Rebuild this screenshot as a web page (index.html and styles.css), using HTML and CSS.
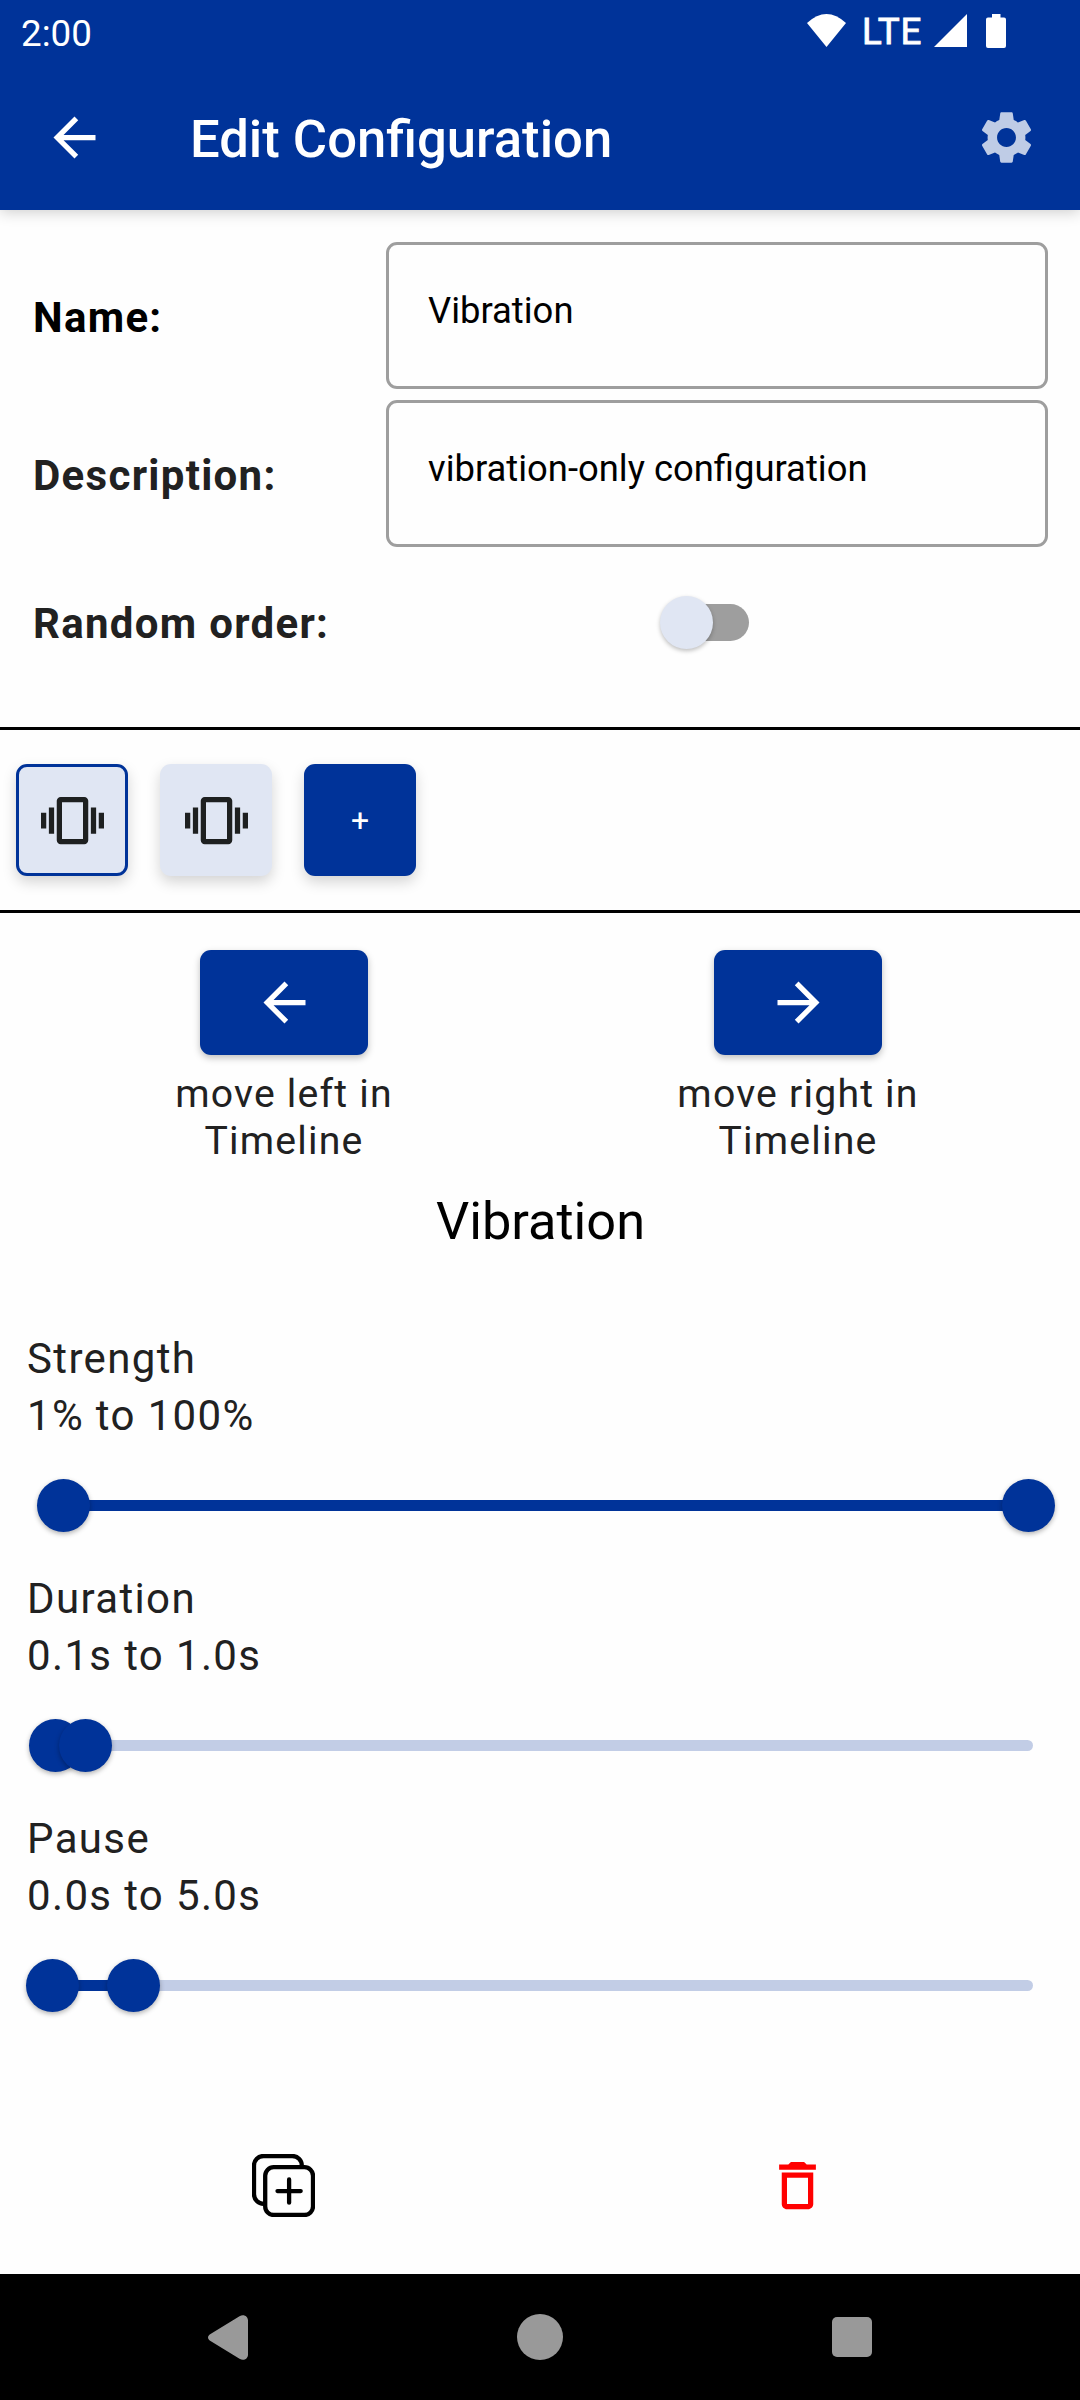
FILE: index.html
```html
<!DOCTYPE html>
<html lang="en">
<head>
<meta charset="utf-8">
<title>Edit Configuration</title>
<link rel="stylesheet" href="styles.css">
</head>
<body>
<div class="screen">
  <header class="top">
    <div class="status">
      <span class="clock">2:00</span>
      <div class="status-icons">
        <svg class="wifi" viewBox="0 0 39 33"><path d="M0 9Q19.500-9 39 9L19.500 33Z"/></svg>
        <span class="network">LTE</span>
        <svg class="signal" viewBox="0 0 33 33"><path d="M33 0V33H0Z"/></svg>
        <svg class="battery" viewBox="0 0 20 34"><path d="M6 0h8.500v3.500H18a2 2 0 0 1 2 2V32a2 2 0 0 1-2 2H2a2 2 0 0 1-2-2V5.500a2 2 0 0 1 2-2H6Z"/></svg>
      </div>
    </div>
    <div class="appbar">
      <svg class="icon" viewBox="0 0 24 24"><path d="M20 11H7.830l5.590-5.590L12 4l-8 8 8 8 1.410-1.410L7.830 13H20v-2z"/></svg>
      <h1 class="title">Edit Configuration</h1>
      <svg class="icon gear" viewBox="0 0 24 24"><path d="M19.140 12.940c.04-.3.06-.61.06-.94 0-.32-.02-.64-.07-.94l2.030-1.580c.18-.14.23-.41.12-.61l-1.920-3.320c-.12-.22-.37-.29-.59-.22l-2.390.96c-.5-.38-1.030-.7-1.620-.94l-.36-2.540c-.04-.24-.24-.41-.48-.41h-3.840c-.24 0-.43.17-.47.41l-.36 2.540c-.59.24-1.130.57-1.620.94l-2.390-.96c-.22-.08-.47 0-.59.22L2.740 8.870c-.12.21-.08.47.12.61l2.030 1.580c-.05.3-.09.63-.09.94s.02.64.07.94l-2.030 1.580c-.18.14-.23.41-.12.61l1.920 3.320c.12.22.37.29.59.22l2.390-.96c.5.38 1.030.7 1.620.94l.36 2.540c.05.24.24.41.48.41h3.840c.24 0 .44-.17.47-.41l.36-2.540c.59-.24 1.130-.56 1.620-.94l2.390.96c.22.08.47 0 .59-.22l1.920-3.320c.12-.22.07-.47-.12-.61l-2.010-1.580zM12 15.600c-1.980 0-3.600-1.620-3.600-3.600s1.620-3.600 3.600-3.600 3.600 1.620 3.600 3.600-1.620 3.600-3.600 3.600z"/></svg>
    </div>
  </header>

  <main class="content">
    <section class="form">
      <span class="label label-strong">Name:</span>
      <div class="field">Vibration</div>
      <span class="label">Description:</span>
      <div class="field">vibration-only configuration</div>
      <span class="label label-switch">Random order:</span>
      <div class="switch-cell"><div class="switch"><div class="switch-thumb"></div></div></div>
    </section>

    <section class="timeline">
      <div class="tile tile-selected">
        <svg class="icon" viewBox="0 0 24 24"><path d="M0 15h2V9H0v6zm3 2h2V7H3v10zm19-8v6h2V9h-2zm-3 8h2V7h-2v10zM16.500 3h-9C6.670 3 6 3.670 6 4.500v15c0 .83.67 1.500 1.500 1.500h9c.83 0 1.500-.67 1.500-1.500v-15c0-.83-.67-1.500-1.500-1.500zM16 19H8V5h8v14z"/></svg>
      </div>
      <div class="tile">
        <svg class="icon" viewBox="0 0 24 24"><path d="M0 15h2V9H0v6zm3 2h2V7H3v10zm19-8v6h2V9h-2zm-3 8h2V7h-2v10zM16.500 3h-9C6.670 3 6 3.670 6 4.500v15c0 .83.67 1.500 1.500 1.500h9c.83 0 1.500-.67 1.500-1.500v-15c0-.83-.67-1.500-1.500-1.500zM16 19H8V5h8v14z"/></svg>
      </div>
      <div class="tile tile-add">+</div>
    </section>

    <section class="columns moves">
      <div class="move">
        <div class="button"><svg class="icon" viewBox="0 0 24 24"><path d="M20 11H7.830l5.590-5.590L12 4l-8 8 8 8 1.410-1.410L7.830 13H20v-2z"/></svg></div>
        <p class="caption">move left in Timeline</p>
      </div>
      <div class="move">
        <div class="button"><svg class="icon" viewBox="0 0 24 24"><path d="M12 4l-1.410 1.410L16.170 11H4v2h12.170l-5.580 5.590L12 20l8-8z"/></svg></div>
        <p class="caption">move right in Timeline</p>
      </div>
    </section>

    <h2 class="heading">Vibration</h2>

    <section class="sliders">
      <div class="setting">
        <p class="setting-text">Strength<br>1% to 100%</p>
        <div class="slider"><div class="track"><div class="range">
          <div class="active" style="left:1.15%;right:0%"></div>
          <div class="thumb" style="left:1.15%"></div>
          <div class="thumb" style="left:99.95%"></div>
        </div></div></div>
      </div>
      <div class="setting">
        <p class="setting-text">Duration<br>0.1s to 1.0s</p>
        <div class="slider"><div class="track"><div class="range">
          <div class="active" style="left:0.33%;right:96.6%"></div>
          <div class="thumb" style="left:0.33%"></div>
          <div class="thumb" style="left:3.4%"></div>
        </div></div></div>
      </div>
      <div class="setting">
        <p class="setting-text">Pause<br>0.0s to 5.0s</p>
        <div class="slider"><div class="track"><div class="range">
          <div class="active" style="left:0%;right:91.67%"></div>
          <div class="thumb" style="left:0%"></div>
          <div class="thumb" style="left:8.33%"></div>
        </div></div></div>
      </div>
    </section>

    <section class="columns actions">
      <svg class="duplicate" viewBox="0 0 63 63"><rect x="13.200" y="13.200" width="47.800" height="47.800" rx="8.500"/><path d="M11.500 49.800A9.500 9.500 0 0 1 2 40.300V11.500A9.500 9.500 0 0 1 11.500 2H40.300A9.500 9.500 0 0 1 49.800 11.500M37.100 25.500V48.700M25.500 37.100H48.700"/></svg>
      <svg class="icon delete" viewBox="0 0 24 24"><path d="M6 19c0 1.100.9 2 2 2h8c1.100 0 2-.9 2-2V7H6v12zM8 9h8v10H8V9zm7.500-5l-1-1h-5l-1 1H5v2h14V4h-3.500z"/></svg>
    </section>
  </main>

  <nav class="navbar">
    <svg class="nav-back" viewBox="0 0 40 45"><path d="M31.500 1.200C35.500-1.300 40 1 40 5.500V39.500C40 44 35.500 46.300 31.500 43.800L2.500 26C-.8 24-.8 21 2.500 19Z"/></svg>
    <div class="nav-home"></div>
    <div class="nav-recent"></div>
  </nav>
</div>
</body>
</html>
```
FILE: styles.css
```css
* {
  box-sizing: border-box;
}

body {
  margin: 0;
  background: #fefefe;
  color: #212121;
  font-family: Roboto, "Liberation Sans", sans-serif;
}

h1,
h2,
p {
  margin: 0;
  font-weight: 400;
}

svg {
  display: block;
  fill: currentColor;
}

.screen {
  display: flex;
  flex-direction: column;
  width: 1080px;
  height: 2400px;
  overflow: hidden;
}

.icon {
  flex: none;
  width: 63px;
  height: 63px;
}

.top {
  height: 210px;
  background: #003399;
  color: #fff;
  box-shadow: 0 2px 14px rgba(0, 0, 0, 0.2);
}

.status {
  display: flex;
  justify-content: space-between;
  height: 63px;
  padding: 0 74px 0 21px;
  font-size: 36.75px;
  line-height: 43px;
}

.clock {
  padding-top: 12px;
}

.status-icons {
  display: flex;
  align-items: flex-start;
}

.wifi {
  width: 39px;
  height: 33px;
  margin-top: 14px;
}

.network {
  width: 62px;
  margin: 10px 10px 0 16px;
  letter-spacing: 0.9px;
  -webkit-text-stroke: 0.8px currentColor;
}

.signal {
  width: 33px;
  height: 33px;
  margin: 14px 19px 0 0;
}

.battery {
  width: 20px;
  height: 34px;
  margin-top: 14px;
}

.appbar {
  display: flex;
  align-items: center;
  height: 147px;
  padding: 2px 42px 0 43px;
}

.title {
  flex: 1;
  padding: 2px 0 0 84px;
  font-size: 52.6px;
  font-weight: 500;
  line-height: 62px;
}

.gear {
  color: #bfcce6;
}

.content {
  flex: 1;
}

.form {
  display: grid;
  grid-template-columns: 353px 662px;
  grid-template-rows: 147px 147px 149px;
  row-gap: 11px;
  align-items: center;
  height: 517px;
  padding: 32px 32px 0 33px;
}

.label {
  padding-top: 5px;
  font-size: 42px;
  font-weight: 700;
  line-height: 50px;
  letter-spacing: 1.3px;
}

.label-strong {
  color: #000;
}

.label-switch {
  padding-bottom: 22px;
}

.field {
  height: 147px;
  padding: 44px 40px 0 39px;
  border: 3px solid #9e9e9e;
  border-radius: 11px;
  color: #000;
  font-size: 36.4px;
  line-height: 43px;
}

.switch-cell {
  display: flex;
  padding: 0 0 21px 274px;
}

.switch {
  display: flex;
  align-items: center;
  width: 89px;
  height: 37px;
  border-radius: 19px;
  background: linear-gradient(90deg, transparent 20px, #9e9e9e 20px);
}

.switch-thumb {
  flex: none;
  width: 53px;
  height: 53px;
  border-radius: 50%;
  background: #e0e6f3;
  box-shadow: 0 2px 4px rgba(0, 0, 0, 0.25);
}

.timeline {
  display: flex;
  gap: 32px;
  height: 186px;
  padding: 34px 16px 0;
  border-top: 3px solid #000;
  border-bottom: 3px solid #000;
}

.tile {
  display: flex;
  align-items: center;
  justify-content: center;
  width: 112px;
  height: 112px;
  border-radius: 11px;
  background: #e0e6f3;
  color: #1e2020;
  box-shadow: 0 6px 14px rgba(0, 0, 0, 0.17);
}

.tile-selected {
  border: 3px solid #003399;
}

.tile-add {
  background: #003399;
  color: #fff;
  font-size: 32px;
  line-height: 38px;
}

.columns {
  display: grid;
  grid-template-columns: 514px 514px;
  justify-content: center;
  justify-items: center;
}

.moves {
  padding: 37px 0 0 2px;
}

.move {
  display: flex;
  flex-direction: column;
  align-items: center;
  gap: 16px;
}

.button {
  display: flex;
  align-items: center;
  justify-content: center;
  width: 168px;
  height: 105px;
  border-radius: 11px;
  background: #003399;
  color: #fff;
  box-shadow: 0 3px 7px rgba(0, 0, 0, 0.25);
}

.caption {
  width: 260px;
  font-size: 39.2px;
  line-height: 47px;
  letter-spacing: 1.2px;
  text-align: center;
}

.heading {
  padding: 25px 0 0 1px;
  color: #000;
  font-size: 52.3px;
  line-height: 62px;
  text-align: center;
}

.sliders {
  padding: 78px 27px 0;
}

.setting {
  height: 240px;
}

.setting-text {
  font-size: 42px;
  line-height: 57px;
  letter-spacing: 1.36px;
}

.slider {
  display: flex;
  align-items: center;
  height: 122px;
  padding: 0 20px;
}

.track {
  flex: 1;
  height: 11px;
  padding: 0 5px;
  border-radius: 6px;
  background: #c2cde6;
}

.range {
  position: relative;
  height: 11px;
}

.active {
  position: absolute;
  top: 0;
  height: 11px;
  background: #003399;
}

.thumb {
  position: absolute;
  top: -21px;
  width: 53px;
  height: 53px;
  margin-left: -26px;
  border-radius: 50%;
  background: #003399;
  box-shadow: 0 2px 5px rgba(0, 0, 0, 0.3);
}

.actions {
  padding-top: 104px;
}

.duplicate {
  width: 63px;
  height: 63px;
  color: #000;
  fill: none;
  stroke: currentColor;
  stroke-width: 4.3;
  stroke-linecap: round;
}

.delete {
  color: #f00;
}

.navbar {
  display: grid;
  grid-template-columns: repeat(3, 312px);
  align-items: center;
  justify-content: center;
  justify-items: center;
  height: 126px;
  padding-right: 1px;
  background: #000;
  color: #999;
}

.nav-back {
  width: 40px;
  height: 45px;
}

.nav-home {
  width: 46px;
  height: 46px;
  border-radius: 50%;
  background: currentColor;
}

.nav-recent {
  width: 40px;
  height: 40px;
  border-radius: 5px;
  background: currentColor;
}
```
